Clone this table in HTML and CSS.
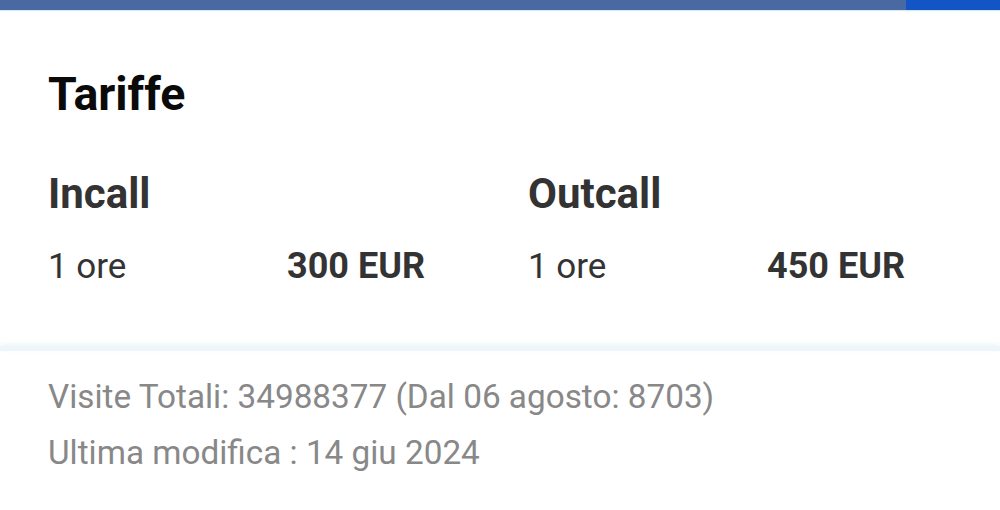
FILE: index.html
```html
<!DOCTYPE html>
<html lang="it">
<head>
<meta charset="utf-8">
<title>Tariffe</title>
<link rel="stylesheet" href="styles.css">
</head>
<body>
<div class="topbar">
  <div class="topbar-main"></div>
  <div class="topbar-accent"></div>
</div>
<section class="card">
  <h1 class="title">Tariffe</h1>
  <div class="rates">
    <div class="rate-col">
      <h2 class="rate-title">Incall</h2>
      <div class="rate-row">
        <span class="rate-time">1 ore</span>
        <span class="rate-price">300 EUR</span>
      </div>
    </div>
    <div class="rate-col">
      <h2 class="rate-title">Outcall</h2>
      <div class="rate-row">
        <span class="rate-time">1 ore</span>
        <span class="rate-price">450 EUR</span>
      </div>
    </div>
  </div>
</section>
<div class="separator"></div>
<footer class="stats">
  <p class="stats-line">Visite Totali: 34988377 (Dal 06 agosto: 8703)</p>
  <p class="stats-line">Ultima modifica : 14 giu 2024</p>
</footer>
</body>
</html>
```

FILE: styles.css
```css
html, body {
  margin: 0;
  padding: 0;
  background: #ffffff;
  font-family: Roboto, "Noto Sans", "Liberation Sans", sans-serif;
}

.topbar {
  display: flex;
  height: 10px;
  box-shadow: 0 1px 1px rgba(120, 200, 230, 0.35);
}

.topbar-main {
  flex: 1;
  background: #4a69a2;
}

.topbar-accent {
  width: 94px;
  background: #1455c6;
}

.card {
  padding: 56px 0 57px 48px;
}

.title {
  margin: 0;
  font-size: 46.5px;
  line-height: 56px;
  font-weight: 700;
  color: #0a0a0a;
}

.rates {
  display: grid;
  grid-template-columns: 480px 480px;
  margin-top: 46px;
}

.rate-title {
  margin: 0;
  font-size: 42px;
  line-height: 52px;
  font-weight: 700;
  color: #333333;
}

.rate-row {
  display: grid;
  grid-template-columns: 239px 240px;
  align-items: baseline;
  margin-top: 24px;
  font-size: 35px;
  line-height: 44px;
  color: #333333;
}

.rate-price {
  font-size: 36px;
  font-weight: 700;
}

.separator {
  height: 5px;
  background: #eef5fb;
  box-shadow: 0 -2px 4px rgba(220, 240, 245, 0.5);
}

.stats {
  padding: 18px 48px 0;
}

.stats-line {
  margin: 0;
  font-size: 33.3px;
  line-height: 56px;
  color: #888888;
}
```
